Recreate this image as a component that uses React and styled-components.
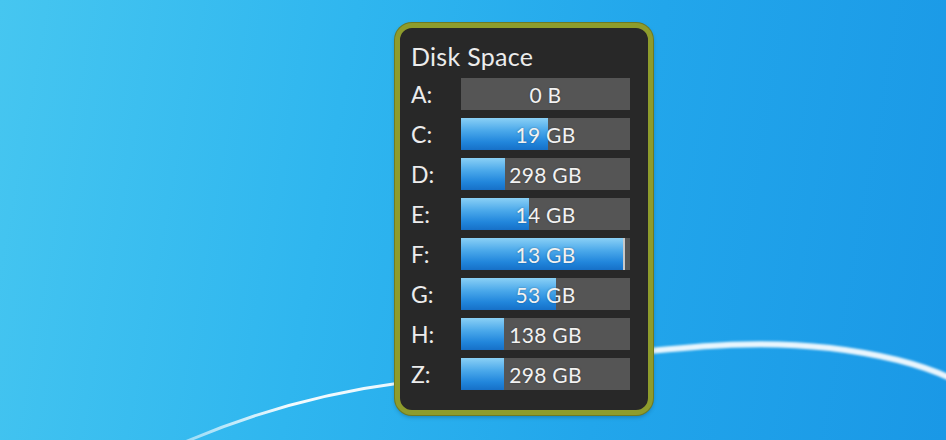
import React from "react";
import styled, { createGlobalStyle } from "styled-components";

const drives = [
  { letter: "A", size: "0 B", used: 0 },
  { letter: "C", size: "19 GB", used: 0.515 },
  { letter: "D", size: "298 GB", used: 0.26 },
  { letter: "E", size: "14 GB", used: 0.4 },
  { letter: "F", size: "13 GB", used: 0.97 },
  { letter: "G", size: "53 GB", used: 0.565 },
  { letter: "H", size: "138 GB", used: 0.255 },
  { letter: "Z", size: "298 GB", used: 0.255 },
];

const GlobalStyle = createGlobalStyle`
  html, body {
    margin: 0;
    padding: 0;
  }
  body {
    font-family: Lato, "Open Sans", sans-serif;
  }
`;

const Desktop = styled.div`
  position: relative;
  width: 946px;
  height: 440px;
  overflow: hidden;
  background: linear-gradient(100deg, #46c6f0 0%, #2fb6ef 35%, #22a6eb 65%, #1a98e6 100%);
  padding: 23px 0 0 395px;
  box-sizing: border-box;
`;

const Wave = styled.svg`
  position: absolute;
  left: 0;
  top: 0;
  pointer-events: none;
`;

const Gadget = styled.section`
  position: relative;
  width: 258px;
  height: 392px;
  box-sizing: border-box;
  border: 5px solid #8e9c2c;
  border-radius: 17px;
  background: #282828;
  box-shadow: 0 0 0 1px #6f7a22, 0 2px 4px rgba(0, 0, 0, 0.25);
  padding: 13px 18px 0 11px;
  color: #ececec;
`;

const Title = styled.h1`
  margin: 0 0 7px;
  font-size: 25px;
  line-height: 30px;
  font-weight: 400;
  letter-spacing: 0.3px;
`;

const List = styled.div`
  display: grid;
  grid-template-columns: 50px 169px;
  grid-auto-rows: 32px;
  row-gap: 8px;
`;

const Label = styled.span`
  font-size: 23px;
  line-height: 32px;
`;

const Track = styled.div`
  position: relative;
  background: #555555;
  overflow: hidden;
`;

const Fill = styled.div`
  height: 100%;
  background: linear-gradient(180deg, #8ad0f6 0%, #4aa8ea 40%, #2186dc 75%, #1670c8 100%);
  border-right: ${(p) => (p.$full ? "2px solid #c9c9c9" : "none")};
  box-sizing: border-box;
`;

const Value = styled.span`
  position: absolute;
  inset: 0;
  display: flex;
  align-items: center;
  justify-content: center;
  font-size: 21px;
  letter-spacing: 0.3px;
  color: #f2f2f2;
  text-shadow: 0 0 2px rgba(0, 0, 0, 0.35);
`;

export default function App() {
  return (
    <>
      <GlobalStyle />
      <Desktop>
        <Wave width="946" height="440" viewBox="0 0 946 440">
          <defs>
            <linearGradient id="w" x1="0" x2="1" y1="0" y2="0">
              <stop offset="0" stopColor="#fff" stopOpacity="0.5" />
              <stop offset="0.5" stopColor="#fff" stopOpacity="0.95" />
              <stop offset="1" stopColor="#fff" stopOpacity="0.9" />
            </linearGradient>
            <filter id="glow" x="-10%" y="-50%" width="120%" height="200%">
              <feGaussianBlur stdDeviation="1.2" />
            </filter>
          </defs>
          <path
            d="M185 442 C 260 410, 330 392, 400 383"
            stroke="url(#w)"
            strokeWidth="3"
            fill="none"
          />
          <path
            d="M640 352 C 700 346, 760 340, 830 348 C 880 354, 920 364, 950 378"
            stroke="#fff"
            strokeOpacity="0.9"
            strokeWidth="6"
            fill="none"
            filter="url(#glow)"
          />
        </Wave>
        <Gadget>
          <Title>Disk Space</Title>
          <List>
            {drives.map((d) => (
              <React.Fragment key={d.letter}>
                <Label>{d.letter}:</Label>
                <Track>
                  <Fill $full={d.used > 0.9} style={{ width: `${d.used * 100}%` }} />
                  <Value>{d.size}</Value>
                </Track>
              </React.Fragment>
            ))}
          </List>
        </Gadget>
      </Desktop>
    </>
  );
}
